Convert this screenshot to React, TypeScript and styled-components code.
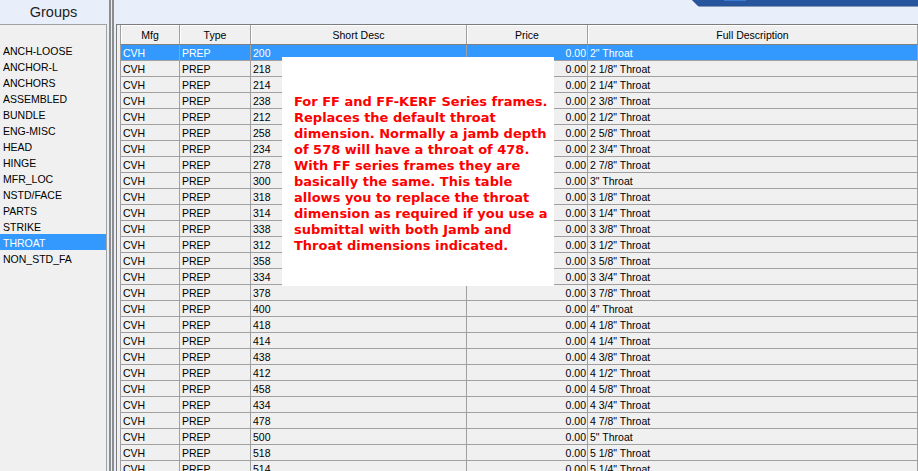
import React from 'react'
import styled, { createGlobalStyle } from 'styled-components'

const GlobalStyle = createGlobalStyle`
  html, body {
    margin: 0;
    padding: 0;
  }
  body {
    width: 918px;
    height: 471px;
    overflow: hidden;
    background: #e8eefa;
    font-family: "Liberation Sans", Arial, sans-serif;
  }
`

const Frame = styled.div`
  display: flex;
  width: 918px;
  height: 471px;
  overflow: hidden;
  background: #e8eefa;
`

const LeftPane = styled.div`
  width: 107px;
  flex-shrink: 0;
  display: flex;
  flex-direction: column;
`

const PaneTitle = styled.div`
  height: 24px;
  display: flex;
  align-items: center;
  justify-content: center;
  font-size: 14.5px;
  color: #1e1e1e;
`

const GroupList = styled.ul`
  flex: 1;
  margin: 0;
  padding: 17px 0 0;
  list-style: none;
  background: #f0f0f0;
  border-top: 1px solid #a0a0a0;
  border-right: 1px solid #a0a0a0;
`

const GroupItem = styled.li<{ $selected?: boolean }>`
  height: 16px;
  line-height: 16px;
  padding: 1px 0 0 3px;
  box-sizing: border-box;
  font-size: 10.5px;
  white-space: nowrap;
  color: ${(p) => (p.$selected ? '#fff' : '#000')};
  background: ${(p) => (p.$selected ? '#3399ff' : 'transparent')};
`

const Splitter = styled.div`
  width: 9px;
  flex-shrink: 0;
  box-sizing: border-box;
  padding: 0 2px;
  display: flex;
  gap: 1px;
`

const Grip = styled.div`
  width: 2px;
  background: #8d8d8d;
`

const RightPane = styled.div`
  flex: 1;
  min-width: 0;
  display: flex;
  flex-direction: column;
`

const TopBar = styled.div`
  height: 24px;
  display: flex;
  justify-content: flex-end;
  align-items: flex-start;
`

const GridBox = styled.div`
  flex: 1;
  position: relative;
  overflow: hidden;
  padding-left: 3px;
  background: #f0f0f0;
  border-top: 1px solid #7c7c7c;
  border-left: 1px solid #7c7c7c;
`

const columns = '59px 71px 216px 121px 1fr'

const HeaderRow = styled.div`
  display: grid;
  grid-template-columns: ${columns};
  height: 20px;
  box-sizing: border-box;
  border-left: 1px solid #a0a0a0;
  border-bottom: 1px solid #808080;
`

const HeaderCell = styled.div`
  display: flex;
  align-items: center;
  justify-content: center;
  padding-top: 1px;
  font-size: 10.5px;
  color: #000;
  border-right: 1px solid #a0a0a0;
  box-shadow: inset 1px 1px 0 #fff;
  white-space: nowrap;
`

const Row = styled.div<{ $selected?: boolean }>`
  display: grid;
  grid-template-columns: ${columns};
  height: 16px;
  box-sizing: border-box;
  border-left: 1px solid #a0a0a0;
  border-bottom: 1px solid #a0a0a0;
  background: ${(p) => (p.$selected ? '#3399ff' : '#f0f0f0')};
  color: ${(p) => (p.$selected ? '#fff' : '#000')};
`

const Cell = styled.div<{ $right?: boolean }>`
  font-size: 10.5px;
  line-height: 16px;
  padding: ${(p) => (p.$right ? '0 1px 0 0' : '0 0 0 2px')};
  text-align: ${(p) => (p.$right ? 'right' : 'left')};
  border-right: 1px solid #a0a0a0;
  white-space: nowrap;
  overflow: hidden;
`

const NoteCard = styled.div`
  position: absolute;
  left: 165px;
  top: 32px;
  width: 272px;
  height: 229px;
  box-sizing: border-box;
  padding: 37px 0 0 12px;
  background: #fff;
`

const NoteLine = styled.div`
  font-family: "DejaVu Sans", Verdana, sans-serif;
  font-weight: bold;
  font-size: 13px;
  line-height: 16px;
  color: #ff0000;
  white-space: nowrap;
`

const groups = [
  'ANCH-LOOSE',
  'ANCHOR-L',
  'ANCHORS',
  'ASSEMBLED',
  'BUNDLE',
  'ENG-MISC',
  'HEAD',
  'HINGE',
  'MFR_LOC',
  'NSTD/FACE',
  'PARTS',
  'STRIKE',
  'THROAT',
  'NON_STD_FA',
]

const rows: [string, string][] = [
  ['200', '2"'],
  ['218', '2 1/8"'],
  ['214', '2 1/4"'],
  ['238', '2 3/8"'],
  ['212', '2 1/2"'],
  ['258', '2 5/8"'],
  ['234', '2 3/4"'],
  ['278', '2 7/8"'],
  ['300', '3"'],
  ['318', '3 1/8"'],
  ['314', '3 1/4"'],
  ['338', '3 3/8"'],
  ['312', '3 1/2"'],
  ['358', '3 5/8"'],
  ['334', '3 3/4"'],
  ['378', '3 7/8"'],
  ['400', '4"'],
  ['418', '4 1/8"'],
  ['414', '4 1/4"'],
  ['438', '4 3/8"'],
  ['412', '4 1/2"'],
  ['458', '4 5/8"'],
  ['434', '4 3/4"'],
  ['478', '4 7/8"'],
  ['500', '5"'],
  ['518', '5 1/8"'],
  ['514', '5 1/4"'],
]

const note = [
  'For FF and FF-KERF Series frames.',
  'Replaces the default throat',
  'dimension. Normally a jamb depth',
  'of 578 will have a throat of 478.',
  'With FF series frames they are',
  'basically the same. This table',
  'allows you to replace the throat',
  'dimension as required if you use a',
  'submittal with both Jamb and',
  'Throat dimensions indicated.',
]

function WindowTab() {
  return (
    <svg width="226" height="7" viewBox="0 0 226 7">
      <polygon points="0,0 226,0 226,7 7,7" fill="#8a9ab4" />
      <polygon points="0,0 226,0 226,6 6,6" fill="#26559d" />
      <rect x="32" y="0" width="22" height="1" fill="#3a78d0" />
    </svg>
  )
}

export default function App() {
  return (
    <Frame>
      <GlobalStyle />
      <LeftPane>
        <PaneTitle>Groups</PaneTitle>
        <GroupList>
          {groups.map((g) => (
            <GroupItem key={g} $selected={g === 'THROAT'}>
              {g}
            </GroupItem>
          ))}
        </GroupList>
      </LeftPane>

      <Splitter>
        <Grip />
        <Grip />
      </Splitter>

      <RightPane>
        <TopBar>
          <WindowTab />
        </TopBar>
        <GridBox>
          <HeaderRow>
            <HeaderCell>Mfg</HeaderCell>
            <HeaderCell>Type</HeaderCell>
            <HeaderCell>Short Desc</HeaderCell>
            <HeaderCell>Price</HeaderCell>
            <HeaderCell>Full Description</HeaderCell>
          </HeaderRow>
          {rows.map(([code, size], i) => (
            <Row key={code} $selected={i === 0}>
              <Cell>CVH</Cell>
              <Cell>PREP</Cell>
              <Cell>{code}</Cell>
              <Cell $right>0.00</Cell>
              <Cell>{size} Throat</Cell>
            </Row>
          ))}

          <NoteCard>
            {note.map((line) => (
              <NoteLine key={line}>{line}</NoteLine>
            ))}
          </NoteCard>
        </GridBox>
      </RightPane>
    </Frame>
  )
}
